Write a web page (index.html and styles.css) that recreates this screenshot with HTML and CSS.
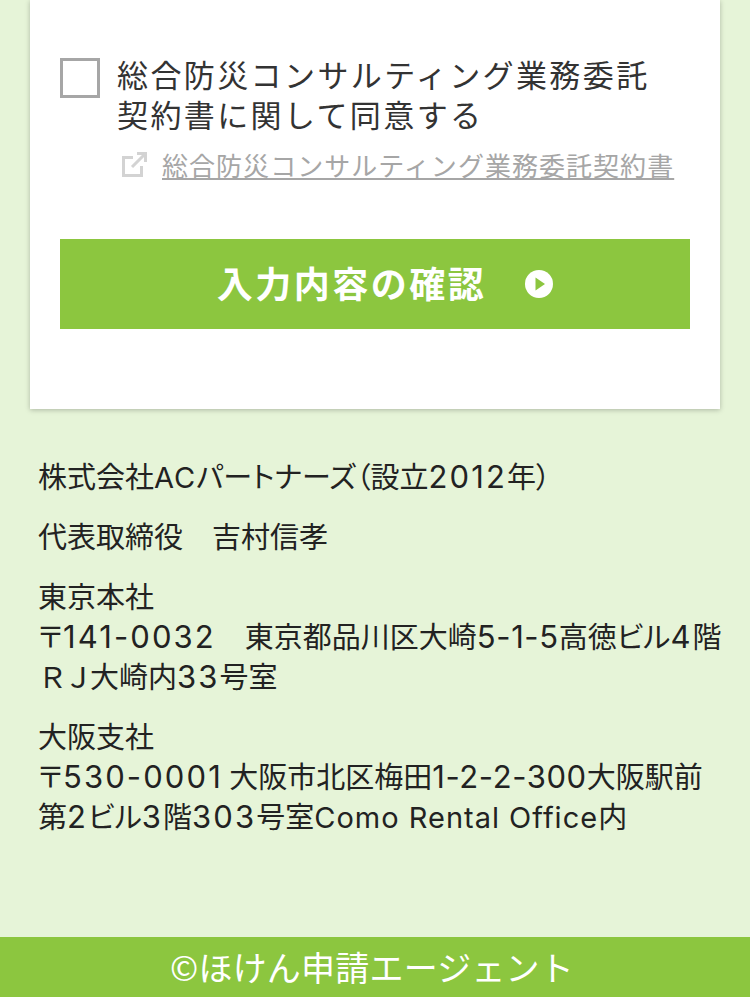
FILE: index.html
```html
<!DOCTYPE html>
<html lang="ja">
<head>
    <meta charset="UTF-8">
    <meta name="viewport" content="width=device-width, initial-scale=1.0">
    <title>ほけん申請エージェント</title>
    <link rel="stylesheet" href="styles.css">
</head>
<body>

    <!-- Form card -->
    <div class="card">
        <label class="agree">
            <span class="checkbox"></span>
            <span class="agree-text">総合防災コンサルティング業務委託<br>契約書に関して同意する</span>
        </label>
        <div class="doc-link">
            <svg class="ext-icon" viewBox="0 0 26 26" width="26" height="26" fill="none" stroke="#d3d3d3" stroke-width="3">
                <path d="M12 5.5H2.5V23.5H20.5V14"/>
                <path d="M16 1.5H24.5V10"/>
                <path d="M24 2L11 15"/>
            </svg>
            <a href="#">総合防災コンサルティング業務委託契約書</a>
        </div>
        <button class="confirm-btn">
            <span>入力内容の確認</span>
            <svg viewBox="0 0 28 28" width="28" height="28">
                <circle cx="14" cy="14" r="14" fill="#fff"/>
                <path d="M10.5 7.5L20 14L10.5 20.5Z" fill="#8cc63f"/>
            </svg>
        </button>
    </div>

    <!-- Company info -->
    <div class="company">
        <p>株式会社<span class="en">AC</span>パートナーズ（設立<span class="num">2012</span>年）</p>
        <p>代表取締役　吉村信孝</p>
        <p>東京本社<br>〒<span class="num">141-0032</span>　東京都品川区大崎<span class="num tight">5-1-5</span>高徳ビル<span class="num">4</span>階<br><span class="wide">ＲＪ</span>大崎内<span class="num">33</span>号室</p>
        <p>大阪支社<br>〒<span class="num">530-0001</span> 大阪市北区梅田<span class="num tight">1-2-2-300</span>大阪駅前<br>第<span class="num">2</span>ビル<span class="num">3</span>階<span class="num">303</span>号室<span class="en">Como Rental Office</span>内</p>
    </div>

    <div class="footer">©ほけん申請エージェント</div>

</body>
</html>
```

FILE: styles.css
```css
* {
    margin: 0;
    padding: 0;
    box-sizing: border-box;
}

html, body {
    height: 100%;
    overflow: hidden;
}

body {
    display: flex;
    flex-direction: column;
    background: #e6f4d8;
    color: #222;
    font-family: "Noto Sans CJK JP", sans-serif;
}

.card {
    height: 409px;
    margin: 0 30px;
    padding: 57px 30px 0;
    background: #fff;
    box-shadow: 0 1px 5px rgba(0, 0, 0, 0.25);
}

.agree {
    display: flex;
    gap: 17px;
}

.checkbox {
    flex: none;
    width: 40px;
    height: 40px;
    margin-top: 1px;
    border: 3px solid #a6a6a6;
}

.agree-text {
    margin-top: -3px;
    font-size: 31px;
    line-height: 39.5px;
    letter-spacing: 2.4px;
    color: #333;
}

.doc-link {
    display: flex;
    align-items: center;
    gap: 15px;
    margin-top: 14px;
    padding-left: 61px;
}

.doc-link a {
    font-size: 26px;
    line-height: 36px;
    letter-spacing: 1.04px;
    color: #a6a6a6;
}

.confirm-btn {
    display: flex;
    align-items: center;
    justify-content: center;
    gap: 39px;
    width: 100%;
    height: 90px;
    margin-top: 56px;
    padding-left: 20px;
    border: none;
    background: #8cc63f;
    color: #fff;
    font-family: inherit;
    font-size: 36px;
    font-weight: 700;
    letter-spacing: 2.5px;
}

.confirm-btn span {
    margin-bottom: 4px;
}

.company {
    flex: 1;
    padding: 46px 8px 0 38px;
    font-size: 29px;
    line-height: 40px;
    white-space: nowrap;
    font-feature-settings: "palt";
}

.company p {
    margin-bottom: 20px;
}

.en,
.num {
    font-family: "Inter", sans-serif;
    line-height: 1;
}

.en {
    letter-spacing: 1px;
}

.num {
    font-size: 31px;
    letter-spacing: 2.1px;
}

.num.tight {
    letter-spacing: 0.6px;
}

.wide {
    font-feature-settings: normal;
    letter-spacing: -3px;
}

.footer {
    height: 60px;
    padding-right: 6px;
    background: #8cc63f;
    color: #fff;
    font-size: 34px;
    line-height: 60px;
    text-align: center;
    letter-spacing: 0.2px;
}
```
